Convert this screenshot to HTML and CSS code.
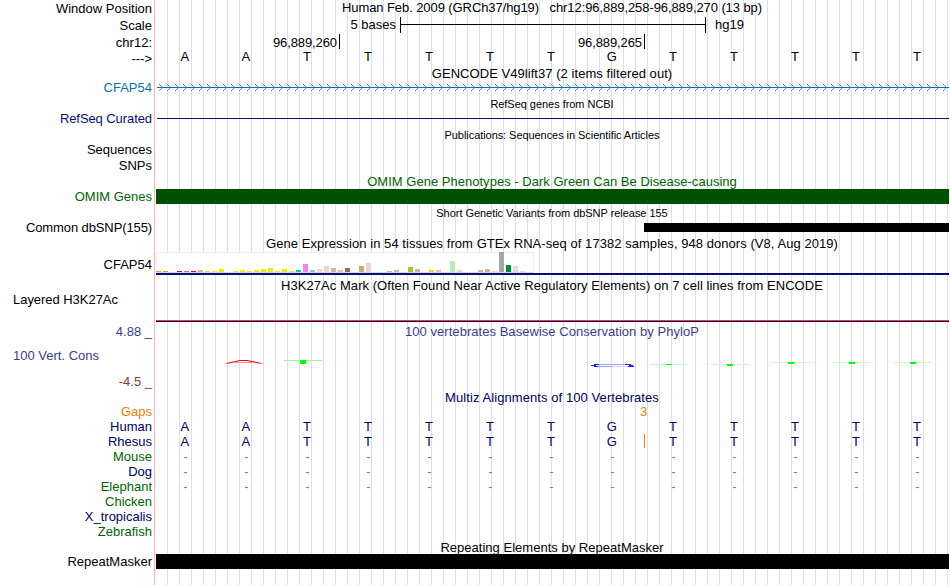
FILE: index.html
```html
<!DOCTYPE html>
<html lang="en">
<head>
    <meta charset="UTF-8">
    <title>Genome Browser</title>
    <link rel="stylesheet" href="styles.css">
</head>
<body>
    <div class="browser">
        <div class="row h16 head">
            <div class="label">Window Position</div>
            <div class="title t-pos">Human Feb. 2009 (GRCh37/hg19) &nbsp; chr12:96,889,258-96,889,270 (13 bp)</div>
        </div>
        <div class="row h17 head">
            <div class="label">Scale</div>
            <div class="track scale">
                <span class="scale-size">5 bases</span>
                <span class="scale-bar"></span>
                <span class="scale-db">hg19</span>
            </div>
        </div>
        <div class="row h17 head">
            <div class="label">chr12:</div>
            <div class="track ruler">
                <span class="tick tick-first">96,889,260</span>
                <span class="tick">96,889,265</span>
            </div>
        </div>
        <div class="row head">
            <div class="label">---&gt;</div>
            <div class="track bases" data-seq="AATTTTTGTTTTT"></div>
        </div>

        <!-- GENCODE -->
        <div class="row"><div class="label"></div><div class="title t-gencode">GENCODE V49lift37 (2 items filtered out)</div></div>
        <div class="row">
            <div class="label gene">CFAP54</div>
            <svg class="track" width="794" height="15">
                <defs>
                    <pattern id="chevrons" x="4" width="8" height="15" patternUnits="userSpaceOnUse">
                        <path d="M0 4.5h1M0 10.5h1M1 5.5h1M1 9.5h1M2 6.5h1M2 8.5h1" stroke="#0c70b0" opacity=".75"/>
                    </pattern>
                </defs>
                <rect x="2" y="0" width="792" height="15" fill="url(#chevrons)"/>
                <rect x="2" y="7" width="792" height="1" fill="#0c70b0"/>
            </svg>
        </div>

        <!-- RefSeq -->
        <div class="row h16"><div class="label"></div><div class="title small t-refseq">RefSeq genes from NCBI</div></div>
        <div class="row">
            <div class="label navy l-refseq">RefSeq Curated</div>
            <div class="track"><div class="line-refseq"></div></div>
        </div>

        <!-- Publications -->
        <div class="row h16"><div class="label"></div><div class="title small t-pubs">Publications: Sequences in Scientific Articles</div></div>
        <div class="row h16"><div class="label">Sequences</div></div>
        <div class="row"><div class="label">SNPs</div></div>

        <!-- OMIM -->
        <div class="row h16"><div class="label"></div><div class="title green t-omim">OMIM Gene Phenotypes - Dark Green Can Be Disease-causing</div></div>
        <div class="row">
            <div class="label green">OMIM Genes</div>
            <div class="track"><div class="bar bar-omim"></div></div>
        </div>

        <!-- dbSNP -->
        <div class="row h16"><div class="label"></div><div class="title small t-snp">Short Genetic Variants from dbSNP release 155</div></div>
        <div class="row">
            <div class="label l-snp">Common dbSNP(155)</div>
            <div class="track"><div class="bar-snp"></div></div>
        </div>

        <!-- GTEx -->
        <div class="row h16"><div class="label"></div><div class="title t-gtex">Gene Expression in 54 tissues from GTEx RNA-seq of 17382 samples, 948 donors (V8, Aug 2019)</div></div>
        <div class="row h26">
            <div class="label l-gtex">CFAP54</div>
            <svg class="track" width="794" height="26" id="gtex">
                <rect x="1" y="1" width="378" height="21" fill="#f0f0f0"/>
                <rect x="2" y="2" width="376" height="19" fill="#fff"/>
                <rect x="1" y="21" width="378" height="1" fill="#d8d8d8"/>
                <rect x="1" y="22" width="793" height="2" fill="#0c0c78"/>
            </svg>
        </div>

        <!-- H3K27Ac -->
        <div class="row h16"><div class="label"></div><div class="title t-h3k">H3K27Ac Mark (Often Found Near Active Regulatory Elements) on 7 cell lines from ENCODE</div></div>
        <div class="row h30">
            <div class="label left">Layered H3K27Ac</div>
            <div class="track"><div class="line-h3k"></div></div>
        </div>

        <!-- PhyloP -->
        <div class="row h16"><div class="label upper">4.88 _</div><div class="title blue t-phylop">100 vertebrates Basewise Conservation by PhyloP</div></div>
        <div class="row h50">
            <div class="label phylop">
                <span class="cons">100 Vert. Cons</span>
                <span class="lower">-4.5 _</span>
            </div>
            <svg class="track" width="794" height="50">
                <path d="M69 24.5L85 21h7L109 24.500h-5L92 22H85L74 24.500z" fill="#ff0000"/>
                <path d="M80 23.500h17" stroke="#ff9090"/>
                <path d="M129 21.500h38" stroke="#90ff90"/>
                <rect x="145" y="21" width="6" height="4" fill="#00ff00"/>
                <path d="M442 25.500h32M442 27.500h16" stroke="#a0a0ff"/>
                <path d="M436 26.500h5M439 25.500h5M439 27.500h4M470 25.500h6M474 26.500h4M473 27.500h6" stroke="#2020ff"/>
                <path d="M459 27.500h14" stroke="#d8d8ff"/>
                <path d="M495 25.500h38M556 25.500h38M617 23.500h38M678 23.500h38M739 23.500h38" stroke="#c8ffc8"/>
                <g fill="#00ff00">
                    <rect x="511" y="25" width="6" height="1"/>
                    <rect x="572" y="25" width="6" height="2"/>
                    <rect x="633" y="23" width="6" height="2"/>
                    <rect x="694" y="23" width="6" height="2"/>
                    <rect x="755" y="23" width="6" height="2"/>
                </g>
            </svg>
        </div>

        <!-- Multiz -->
        <div class="row"><div class="label"></div><div class="title dark t-multiz">Multiz Alignments of 100 Vertebrates</div></div>
        <div class="row"><div class="label orange">Gaps</div><div class="track orange gap-count">3</div></div>
        <div class="row"><div class="label dark">Human</div><div class="track bases dark" data-seq="AATTTTTGTTTTT"></div></div>
        <div class="row"><div class="label dark">Rhesus</div><div class="track bases dark insert" data-seq="AATTTTTGTTTTT"></div></div>
        <div class="row"><div class="label green">Mouse</div><div class="track bases dash" data-seq="-------------"></div></div>
        <div class="row"><div class="label dark">Dog</div><div class="track bases dash" data-seq="-------------"></div></div>
        <div class="row"><div class="label green">Elephant</div><div class="track bases dash" data-seq="-------------"></div></div>
        <div class="row"><div class="label green">Chicken</div></div>
        <div class="row"><div class="label dark">X_tropicalis</div></div>
        <div class="row"><div class="label green">Zebrafish</div></div>

        <!-- RepeatMasker -->
        <div class="row"><div class="label"></div><div class="title t-rmsk">Repeating Elements by RepeatMasker</div></div>
        <div class="row">
            <div class="label">RepeatMasker</div>
            <div class="track"><div class="bar"></div></div>
        </div>
    </div>

    <script src="script.js"></script>
</body>
</html>
```
FILE: styles.css
```css
body {
    margin: 0;
    background: #fff;
    font-family: "Liberation Sans", Arial, sans-serif;
    font-size: 13px;
    color: #000;
}
.browser {
    width: 949px;
    height: 585px;
    overflow: hidden;
    background:
        linear-gradient(#ffb4b4, #ffb4b4) 154px 0 / 1px 100% no-repeat,
        linear-gradient(#fff, #fff) 0 0 / 167px 100% no-repeat,
        repeating-linear-gradient(to right, #dcdcf5 0, #dcdcf5 1px, transparent 1px, transparent 12px) 167px 0 no-repeat;
}
.row {
    display: flex;
    height: 15px;
    line-height: 15px;
    white-space: nowrap;
}
.h16 { height: 16px; line-height: 16px; }
.h17 { height: 17px; line-height: 17px; }
.h26 { height: 26px; line-height: 26px; }
.h30 { height: 30px; }
.h50 { height: 50px; }

.label {
    flex: none;
    width: 152px;
    margin-right: 3px;
    text-align: right;
}
.head .label { padding-top: 1px; }
.left {
    box-sizing: border-box;
    padding-left: 13px;
    text-align: left;
    line-height: 13px;
    letter-spacing: -0.04px;
}
.track {
    flex: none;
    width: 794px;
}
.title {
    flex: none;
    width: 794px;
    padding-top: 1px;
    text-align: center;
}
.small { font-size: 11px; }

.t-pos { padding-top: 0; letter-spacing: -0.085px; }
.t-gencode { letter-spacing: 0.05px; }
.t-refseq { letter-spacing: -0.04px; }
.t-pubs { letter-spacing: -0.06px; }
.t-omim { letter-spacing: 0.02px; }
.t-snp { letter-spacing: -0.04px; }
.t-gtex { letter-spacing: 0.05px; }
.t-h3k { letter-spacing: 0.05px; }
.t-phylop { letter-spacing: 0.04px; }
.t-multiz { letter-spacing: 0.08px; }
.t-rmsk { letter-spacing: 0.02px; }
.l-refseq { letter-spacing: -0.08px; }
.l-snp { letter-spacing: -0.11px; }
.l-gtex { padding-top: 1px; }

.gene { color: #0c70b0; }
.navy { color: #0c0c78; }
.dark { color: #000064; }
.green { color: #006400; }
.blue { color: #3c3c8c; }
.orange { color: #e68200; }

/* scale and ruler */
.scale { display: flex; }
.scale-size {
    width: 241px;
    margin-right: 4px;
    text-align: right;
}
.scale-bar {
    box-sizing: border-box;
    width: 306px;
    height: 16px;
    margin-top: 1px;
    border: solid #000;
    border-width: 0 1px;
    background: linear-gradient(#000, #000) 0 7px / 100% 1px no-repeat;
}
.scale-db { margin-left: 9px; }
.ruler { display: flex; }
.tick {
    box-sizing: border-box;
    width: 305px;
    height: 15px;
    margin-top: 1px;
    padding-right: 2px;
    border-right: 1px solid #000;
    text-align: right;
    letter-spacing: -0.1px;
}
.tick-first { width: 185px; }

.bases {
    display: grid;
    grid-template-columns: repeat(13, 61px);
    margin-left: -0.6px;
    text-align: center;
}
.head .bases { line-height: 14px; }
.dash { color: #7878a8; padding-left: 0.5px; }
.gap-count {
    box-sizing: border-box;
    padding-left: 485px;
}
.insert { background: linear-gradient(#e68200, #e68200) 490px 0 / 1px 14px no-repeat; }

/* items */
.line-refseq {
    height: 1px;
    margin: 7px 0 0 2px;
    background: #0c0c78;
}
.bar {
    height: 15px;
    margin-left: 1px;
    background: #000;
}
.bar-omim { background: #005000; }
.bar-snp {
    height: 9px;
    margin: 3px 0 0 489px;
    background: #000;
}
.line-h3k {
    height: 1px;
    margin: 27px 0 0 1px;
    background: #d83c78;
    border-bottom: 1px solid #280028;
}
.upper {
    padding-top: 1px;
    color: #3c3c8c;
}
.phylop {
    display: flex;
    flex-direction: column;
    justify-content: space-between;
}
.cons {
    padding: 9px 0 0 13px;
    text-align: left;
    color: #3c3c8c;
}
.lower {
    color: #8c3c3c;
}
```
FILE: script.js
```javascript
// one cell per base
document.querySelectorAll('.bases').forEach(row => {
    for (const base of row.dataset.seq) {
        const cell = document.createElement('span');
        cell.textContent = base;
        row.appendChild(cell);
    }
});

// tissue bars: [slot, height, color]
const tissues = [
    [0, 1, '#ee9a49'], [1, 1, '#ee9a00'], [3, 1, '#8b1c62'], [4, 1, '#ee6a50'],
    [5, 1, '#ff0000'], [6, 2, '#cdb79e'], [7, 1, '#eeee00'], [8, 1, '#eeee00'],
    [9, 3, '#eeee00'], [11, 1, '#eeee00'], [12, 2, '#eeee00'], [13, 1, '#eeee00'],
    [14, 2, '#eeee00'], [15, 3, '#eeee00'], [16, 4, '#eeee00'], [17, 1, '#eeee00'],
    [18, 3, '#eeee00'], [19, 1, '#eeee00'], [20, 2, '#00cdcd'], [21, 8, '#ee82ee'],
    [22, 2, '#9ac0cd'], [23, 3, '#eed5d2'], [24, 6, '#eed5d2'], [25, 4, '#cdb79e'],
    [26, 2, '#eec591'], [27, 4, '#8b7355'], [29, 6, '#cdaa7d'], [30, 9, '#eed5d2'],
    [33, 1, '#cdb79e'], [34, 2, '#cdb79e'], [36, 5, '#9acd32'], [37, 3, '#cdb79e'],
    [39, 2, '#ffd700'], [40, 2, '#ffb6c1'], [42, 11, '#b4eeb4'], [43, 2, '#d9d9d9'],
    [46, 2, '#cdb79e'], [47, 3, '#cdb79e'], [48, 1, '#ffd39b'], [49, 20, '#a6a6a6'],
    [50, 7, '#008b45'], [51, 6, '#eed5d2'], [52, 1, '#eed5d2']
];
const gtex = document.getElementById('gtex');
tissues.forEach(([slot, height, color]) => {
    const bar = document.createElementNS('http://www.w3.org/2000/svg', 'rect');
    bar.setAttribute('x', 1 + slot * 7);
    bar.setAttribute('y', 21 - height);
    bar.setAttribute('width', 5);
    bar.setAttribute('height', height);
    bar.setAttribute('fill', color);
    gtex.appendChild(bar);
});
```
